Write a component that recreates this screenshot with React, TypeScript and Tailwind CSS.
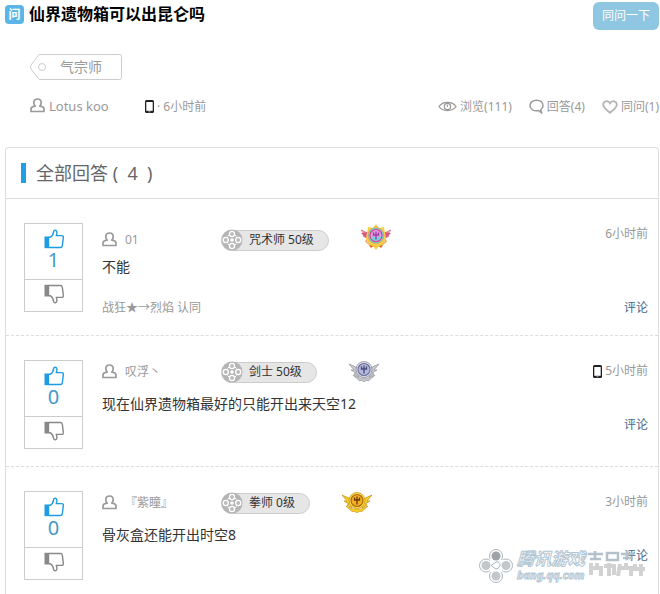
import type { ReactNode } from "react";

interface Answer {
  id: number;
  name: string;
  role: string;
  badge: "rainbow" | "silver" | "gold";
  time: string;
  mobile?: boolean;
  votes: number;
  text: string;
  agreedBy?: string;
}

const answers: Answer[] = [
  { id: 1, name: "01", role: "咒术师 50级", badge: "rainbow", time: "6小时前", votes: 1, text: "不能", agreedBy: "战狂★→烈焰 认同" },
  { id: 2, name: "叹浮丶", role: "剑士 50级", badge: "silver", time: "5小时前", mobile: true, votes: 0, text: "现在仙界遗物箱最好的只能开出来天空12" },
  { id: 3, name: "『紫瞳』", role: "拳师 0级", badge: "gold", time: "3小时前", votes: 0, text: "骨灰盒还能开出时空8" },
];

const badgeColors = {
  rainbow: { wing: "#f7cf4a", tip: "#d9548a", edge: "#e59a3a", ring: "#d83f9a", core: "#d9a0dc", mark: "#a03aa8", low: "#6fd0d8" },
  silver: { wing: "#c9c9cf", tip: "#8f8f98", edge: "#85868f", ring: "#6f739c", core: "#b4b8dc", mark: "#454a78", low: "#dcdeec" },
  gold: { wing: "#f5cf2a", tip: "#c98d0a", edge: "#c98d0a", ring: "#a8690a", core: "#f3ae24", mark: "#6c3806", low: "#ffe05a" },
};

function UserIcon() {
  return (
    <svg className="mb-0.5 h-[15px] w-[15px] shrink-0" viewBox="0 0 15 15" fill="none" stroke="#999" strokeWidth="1.7" strokeLinejoin="round">
      <path d="M5.200 8.200C4 7 3.800 5.800 3.800 4.700C3.800 2.200 5.300 1 7.500 1C9.700 1 11.200 2.200 11.200 4.700C11.200 5.800 11 7 9.800 8.200C12.500 8.600 14 9.500 14 11V13.500H1V11C1 9.500 2.500 8.600 5.200 8.200Z" />
    </svg>
  );
}

function PhoneIcon() {
  return (
    <svg className="h-[13px] w-[9px] shrink-0" viewBox="0 0 9 13">
      <rect width="9" height="13" rx="1.500" fill="#222" />
      <rect x="1.300" y="2" width="6.400" height="8.800" fill="#fff" />
      <rect x="3.500" y="11.300" width="2" height="1" fill="#aaa" />
    </svg>
  );
}

function ThumbIcon({ down = false }: { down?: boolean }) {
  return (
    <svg className={down ? "h-5 w-5 -scale-y-100" : "h-5 w-5"} viewBox="0 0 20 20" fill="none" stroke="currentColor" strokeWidth="1.400" strokeLinejoin="round">
      <rect x="0.500" y="7.500" width="4.700" height="11.700" fill="currentColor" stroke="none" />
      <path d="M5 8.200H6.500C8.800 6.800 9.300 5 9.600 2.600C9.900 0.700 12.700 0.700 12.900 3C13 4.600 12.700 5.500 12.300 6.600H17.600C19.100 6.600 19.500 7.500 19.300 8.800L18.300 16.800C18 18.100 17.500 18.500 16.500 18.500H5" />
    </svg>
  );
}

function EyeIcon() {
  return (
    <svg className="h-[13px] w-[19px]" viewBox="0 0 20 13" fill="none" stroke="#999" strokeWidth="1.300">
      <path d="M1 6.500C5 0.800 15 0.800 19 6.500C15 12.200 5 12.200 1 6.500Z" />
      <circle cx="10" cy="6.500" r="3.300" />
      <path d="M10 4.500V7" />
    </svg>
  );
}

function BubbleIcon() {
  return (
    <svg className="h-[15px] w-[15px]" viewBox="0 0 15 15" fill="none" stroke="#999" strokeWidth="1.500">
      <path d="M9.500 11.500C5 12.500 1 10.300 1 6.600C1 3.300 3.800 1.200 7.500 1.200C11.200 1.200 14 3.300 14 6.600C14 8.500 13.200 9.900 11.800 10.700L12.500 13.800Z" />
    </svg>
  );
}

function HeartIcon() {
  return (
    <svg className="h-[14px] w-4" viewBox="0 0 16 14" fill="none" stroke="#b4b4b4" strokeWidth="1.800">
      <path d="M8 12.800C4 9.800 1.200 7.500 1.200 4.600C1.200 1 6 -0.200 8 3.300C10 -0.200 14.800 1 14.800 4.600C14.800 7.500 12 9.800 8 12.800Z" />
    </svg>
  );
}

function RoleIcon() {
  return (
    <svg className="h-[22px] w-[22px] shrink-0" viewBox="0 0 22 22">
      <circle cx="11" cy="11" r="10.500" fill="#b5b5b5" />
      <g fill="#fff">
        <circle cx="11" cy="5" r="3.200" />
        <circle cx="11" cy="17" r="3.200" />
        <circle cx="4.800" cy="11" r="3.200" />
        <circle cx="17.200" cy="11" r="3.200" />
        <circle cx="11" cy="11" r="1.800" />
      </g>
      <g fill="#bbb">
        <circle cx="11" cy="5" r="1.900" />
        <circle cx="11" cy="17" r="1.900" />
        <circle cx="4.800" cy="11" r="1.900" />
        <circle cx="17.200" cy="11" r="1.900" />
      </g>
      <path d="M6.500 7.500L8 6M14 6L15.500 7.500M6.500 14.500L8 16M14 16L15.500 14.500" stroke="#fff" />
    </svg>
  );
}

function Badge({ kind }: { kind: Answer["badge"] }) {
  const c = badgeColors[kind];
  const rainbow = kind === "rainbow";
  return (
    <svg className={rainbow ? "mb-1.5 h-[26px] w-8 shrink-0" : "mb-0.5 h-[22px] w-8 shrink-0"} viewBox={rainbow ? "0 -2 32 26" : "0 0 32 22"}>
      <path d="M1 4L10 8L11 17L6 14L8 13L3 10L6 10Z" fill={c.wing} stroke={c.tip} strokeWidth="0.700" />
      <path d="M31 4L22 8L21 17L26 14L24 13L29 10L26 10Z" fill={c.wing} stroke={c.tip} strokeWidth="0.700" />
      <path d="M5 15L12 18H20L27 15L21 20.500H18L16 22L14 20.500H11Z" fill={c.wing} stroke={c.edge} strokeWidth="0.600" />
      {rainbow && (
        <>
          <path d="M16 -2L19 2L24 1L25 7L29 6L25 15L20 19L16 24L12 19L7 15L3 6L7 7L8 1L13 2Z" fill={c.wing} />
          <path d="M1 7L7 6L6 12ZM31 7L25 6L26 12Z" fill={c.tip} />
          <path d="M9 19L13 20L11 22ZM23 19L19 20L21 22Z" fill="#e65a2c" />
        </>
      )}
      <circle cx="16" cy="9.500" r="8" fill={c.low} stroke={c.edge} strokeWidth="0.700" />
      <circle cx="16" cy="9.500" r="6" fill={c.core} stroke={c.ring} strokeWidth="1.200" />
      {rainbow && <path d="M10.500 11H21.500A6 6 0 0 1 10.500 11Z" fill={c.low} />}
      <path d="M16 5.500V13.500M13.500 6.500V9H18.500V6.500" fill="none" stroke={c.mark} strokeWidth="1.300" />
    </svg>
  );
}

function Stat({ icon, children }: { icon: ReactNode; children: ReactNode }) {
  return (
    <span className="flex items-center gap-[3px]">
      {icon}
      {children}
    </span>
  );
}

function VoteBox({ votes }: { votes: number }) {
  return (
    <div className="w-[59px] shrink-0 self-start border border-[#ccc]">
      <button aria-label="赞同" className="flex h-14 w-full flex-col items-center border-b border-[#ccc] pt-[5px] text-[#1e9be2]">
        <ThumbIcon />
        <span className="text-[20px] leading-[22px] text-[#4697c9]">{votes}</span>
      </button>
      <button aria-label="反对" className="flex h-[31px] w-full justify-center pt-1 text-[#888]">
        <ThumbIcon down />
      </button>
    </div>
  );
}

function AnswerRow({ answer }: { answer: Answer }) {
  return (
    <li className="flex gap-[19px] border-b border-dashed border-[#ddd] pt-6 pr-[10px] pb-[17px] pl-[18px] last:border-b-0">
      <VoteBox votes={answer.votes} />
      <div className="min-w-0 flex-1">
        <div className={`flex items-center ${answer.agreedBy ? "h-[34px]" : "mb-[10px] h-6"}`}>
          <span className="flex w-[119px] shrink-0 items-center gap-2 text-xs text-[#999]">
            <UserIcon />
            {answer.name}
          </span>
          <span className="mr-[31px] flex h-[21px] shrink-0 items-center gap-1.5 rounded-full border border-[#ccc] bg-[#e6e6e6] pr-[14px] text-xs text-[#333]">
            <span className="-ml-px">
              <RoleIcon />
            </span>
            {answer.role}
          </span>
          <Badge kind={answer.badge} />
          <span className="ml-auto flex h-[22px] shrink-0 items-center gap-[3px] self-start text-xs text-[#999]">
            {answer.mobile && <PhoneIcon />}
            {answer.time}
          </span>
        </div>
        <p className="text-sm leading-5 text-[#333]">{answer.text}</p>
        <div className={`flex items-center justify-between text-xs leading-5 text-[#999] ${answer.agreedBy ? "mt-[21px]" : "mt-px"}`}>
          <span>{answer.agreedBy}</span>
          <a href="#" className="text-[#4a6785]">评论</a>
        </div>
      </div>
    </li>
  );
}

function Watermark() {
  return (
    <div className="pointer-events-none absolute right-[13px] bottom-3.5 flex items-center select-none">
      <svg className="mr-1 h-[34px] w-[34px]" viewBox="0 0 34 34" fill="#fff" stroke="#a9b6c0">
        <circle cx="17" cy="7" r="6.500" />
        <circle cx="17" cy="27" r="6.500" />
        <circle cx="7" cy="16.500" r="6.500" />
        <circle cx="27" cy="16.500" r="6.500" />
        <path d="M11 10L24 11L23 23L11 23Z" stroke="none" />
        <g fill="#c4c7ca" stroke="none">
          <circle cx="17" cy="7" r="4.500" fill="#a0a3a6" />
          <circle cx="17" cy="27" r="4.500" />
          <circle cx="7" cy="16.500" r="4.500" />
          <circle cx="27" cy="16.500" r="4.500" />
        </g>
        <path d="M12 16.500L17 13Q21 12 21 16.500Q20 20 17 20Z" />
      </svg>
      <div className="w-[70px] font-bold whitespace-nowrap text-white italic [-webkit-text-stroke:1px_#b3c6d3]">
        <div className="text-[17px] leading-[18px]">腾讯游戏</div>
        <div className="text-[11px] leading-[14px]">bang.qq.com</div>
      </div>
      {/* pixelated tail of the watermark */}
      <svg className="mb-1 h-7 w-[60px]" viewBox="0 0 60 28" fill="none">
        <g stroke="#b4c1ca" strokeWidth="2.500">
          <path d="M1 4H16M8 1V8M3 9H14M20 3H31V10H20ZM34 4H46M40 1V10M36 8H46" />
        </g>
        <g stroke="#d2d2d2" strokeWidth="4">
          <path d="M4 13V25M4 18H14V26M10 13V18M22 13V26M17 16H29M27 16V25M33 14L31 26M34 18H44V26M39 13V18M48 14V20M45 19H58M54 14V26" />
        </g>
      </svg>
    </div>
  );
}

export default function App() {
  return (
    <main className="relative min-h-screen overflow-hidden bg-white pt-0.5 pr-px pl-[5px] font-['Noto_Sans','Noto_Sans_CJK_SC',sans-serif]">
      <header className="flex items-start justify-between">
        <h1 className="flex items-center gap-[5px] text-base leading-[25px] font-bold text-black">
          <span className="flex h-[19px] w-[19px] items-center justify-center rounded bg-[#5bb5e8] text-xs text-white">问</span>
          仙界遗物箱可以出昆仑吗
        </h1>
        <button className="h-7 rounded-md bg-[#8fc7e2] px-[9px] text-xs text-white">同问一下</button>
      </header>

      <div className="mt-6 ml-[25px]">
        <a href="#" className="relative flex h-[26px] w-[92px] items-center pl-[30px] text-sm text-[#999]">
          <svg className="absolute inset-0 h-[26px] w-[92px]" viewBox="0 0 92 26" fill="none" stroke="#ccc">
            <path d="M9 0.500H89.500Q91.500 0.500 91.500 2.500V23.500Q91.500 25.500 89.500 25.500H9L1 15Q0 13 1 11Z" />
            <circle cx="12" cy="13" r="3.500" />
          </svg>
          气宗师
        </a>
      </div>

      <div className="mt-4 ml-[25px] flex h-[21px] items-center text-xs text-[#999]">
        <span className="flex w-[115px] items-center gap-1 text-[13px]">
          <UserIcon />
          Lotus koo
        </span>
        <span className="flex items-center gap-[3px]">
          <PhoneIcon />· 6小时前
        </span>
        <span className="ml-auto flex gap-[17px]">
          <Stat icon={<EyeIcon />}>浏览(111)</Stat>
          <Stat icon={<BubbleIcon />}>回答(4)</Stat>
          <Stat icon={<HeartIcon />}>同问(1)</Stat>
        </span>
      </div>

      <section className="mt-[30px] rounded-t-sm border border-b-0 border-[#ddd]">
        <h2 className="flex h-[51px] items-center gap-[10px] border-b border-[#ddd] pl-[15px] text-lg text-[#666]">
          <span className="h-5 w-[5px] bg-[#1e9fe6]" />
          全部回答 (&nbsp; 4 &nbsp;)
        </h2>
        <ul>
          {answers.map((a) => (
            <AnswerRow key={a.id} answer={a} />
          ))}
        </ul>
      </section>

      <Watermark />
    </main>
  );
}
